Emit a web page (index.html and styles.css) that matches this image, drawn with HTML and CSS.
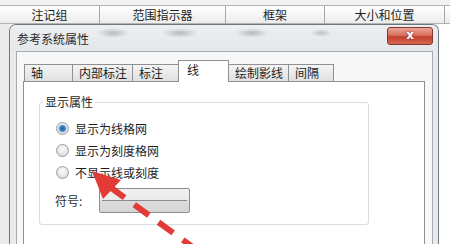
FILE: index.html
```html
<!DOCTYPE html>
<html lang="zh-CN">
<head>
<meta charset="utf-8">
<title>参考系统属性</title>
<link rel="stylesheet" href="styles.css">
</head>
<body>
<div class="header">
  <div class="hcell w1">注记组</div>
  <div class="hcell w2">范围指示器</div>
  <div class="hcell w3">框架</div>
  <div class="hcell w4">大小和位置</div>
  <div class="hcell w5"></div>
</div>
<div class="main">
  <div class="gutter-left"></div>
  <div class="dialog">
    <div class="titlebar">
      <span class="title">参考系统属性</span>
      <span class="close">x</span>
    </div>
    <div class="client">
      <div class="tabs">
        <div class="tab t1">轴</div>
        <div class="tab t2">内部标注</div>
        <div class="tab t3">标注</div>
        <div class="tab t4 active">线</div>
        <div class="tab t5">绘制影线</div>
        <div class="tab t6">间隔</div>
      </div>
      <div class="panel">
        <div class="group">
          <span class="legend">显示属性</span>
          <div class="options">
            <div class="opt"><span class="radio checked"></span>显示为线格网</div>
            <div class="opt"><span class="radio"></span>显示为刻度格网</div>
            <div class="opt"><span class="radio"></span>不显示线或刻度</div>
          </div>
          <div class="symrow">
            <span class="symlabel">符号:</span>
            <span class="symbtn"><span class="symline"></span></span>
          </div>
        </div>
      </div>
    </div>
  </div>
  <div class="gutter-right"></div>
</div>
<svg class="arrow" width="450" height="244" viewBox="0 0 450 244">
  <line x1="110" y1="187" x2="205" y2="256" stroke="#e23a35" stroke-width="6" stroke-dasharray="18 12"/>
  <polygon points="92,171 103,199 121,180" fill="#e23a35"/>
</svg>
</body>
</html>
```

FILE: styles.css
```css
html, body {
  margin: 0;
  padding: 0;
}
body {
  width: 450px;
  height: 244px;
  overflow: hidden;
  background: #f2f2f2;
  font-family: "Noto Sans CJK SC", "Noto Sans", sans-serif;
  font-size: 12px;
  color: #1e1e1e;
  position: relative;
}
.header {
  display: flex;
  padding-top: 5px;
  height: 19px;
}
.hcell {
  box-sizing: border-box;
  height: 19px;
  border-top: 1px solid #b4b4b4;
  border-bottom: 1px solid #b4b4b4;
  border-right: 1px solid #a8a8a8;
  background: linear-gradient(#ffffff, #ececec);
  text-align: center;
  line-height: 17px;
  white-space: nowrap;
}
.w1 { width: 100px; }
.w2 { width: 126px; }
.w3 { width: 99px; }
.w4 { width: 120px; }
.w5 { width: 5px; border-right: none; }

.main {
  display: flex;
  height: 220px;
  overflow: hidden;
}
.gutter-left {
  width: 9px;
  background: #ebebeb;
}
.gutter-right {
  flex: 1;
  background: #ffffff;
}
.dialog {
  box-sizing: border-box;
  width: 430px;
  height: 220px;
  border: 1px solid #6c7782;
  border-bottom: none;
  border-radius: 7px 7px 0 0;
  background: #e8eaed;
}
.titlebar {
  display: flex;
  align-items: center;
  height: 26px;
  padding-left: 7px;
  background:
    radial-gradient(ellipse 16px 5px at 103px 8px, rgba(110,110,110,.40), transparent),
    radial-gradient(ellipse 18px 5px at 170px 8px, rgba(110,110,110,.40), transparent),
    radial-gradient(ellipse 17px 5px at 242px 8px, rgba(110,110,110,.40), transparent),
    radial-gradient(ellipse 11px 4px at 311px 8px, rgba(110,110,110,.35), transparent),
    linear-gradient(#eceef0, #e5e8eb);
  border-radius: 6px 6px 0 0;
}
.title {
  color: #2a2a2a;
}
.close {
  box-sizing: border-box;
  margin-left: auto;
  margin-right: 5px;
  align-self: flex-start;
  margin-top: 2px;
  width: 46px;
  height: 18px;
  border: 1px solid #84372c;
  border-radius: 3px;
  background: linear-gradient(#eba596, #d8705e 45%, #c4412f 55%, #d5674f);
  color: #fff;
  font-family: "DejaVu Sans", sans-serif;
  font-weight: bold;
  font-size: 12px;
  line-height: 15px;
  text-align: center;
  text-shadow: 0 0 2px #6b1d12;
}
.client {
  box-sizing: border-box;
  margin: 0 5px 0 6px;
  height: 193px;
  border: 1px solid #a7abb0;
  border-bottom: none;
  background: #f7f7f7;
  padding: 8px 7px 0 6px;
}
.tabs {
  display: flex;
  align-items: flex-end;
  height: 22px;
  margin-left: 1px;
  margin-bottom: -1px;
  position: relative;
  z-index: 1;
}
.tab {
  box-sizing: border-box;
  height: 18px;
  padding-left: 6px;
  border: 1px solid #8e9093;
  border-right: none;
  background: linear-gradient(#f4f4f4, #e0e0e0);
  line-height: 16px;
  white-space: nowrap;
}
.t6 { border-right: 1px solid #8e9093; }
.tab.active {
  height: 22px;
  background: #ffffff;
  border-bottom: none;
  padding-left: 8px;
  line-height: 18px;
  border-right: 1px solid #8e9093;
}
.tab.active + .tab { border-left: none; }
.t1 { width: 48px; }
.t2 { width: 60px; }
.t3 { width: 46px; }
.t4 { width: 51px; }
.t5 { width: 59px; }
.t6 { width: 46px; }

.panel {
  box-sizing: border-box;
  height: 163px;
  border: 1px solid #8e9093;
  border-bottom: none;
  background: #ffffff;
  padding: 20px 0 0 15px;
}
.group {
  box-sizing: border-box;
  width: 330px;
  height: 123px;
  border: 1px solid #d7dde2;
  border-radius: 3px;
}
.legend {
  display: block;
  width: fit-content;
  margin: -9px 0 0 3px;
  padding: 0 2px;
  line-height: 16px;
  background: #ffffff;
}
.options {
  margin-top: 7px;
}
.opt {
  display: flex;
  align-items: center;
  height: 22px;
  padding-left: 16px;
  gap: 6px;
}
.radio {
  box-sizing: border-box;
  width: 13px;
  height: 13px;
  border-radius: 50%;
  border: 1px solid #9c9c9c;
  background: radial-gradient(circle at 50% 35%, #fbfbfb, #d4d4d4);
}
.radio.checked {
  background:
    radial-gradient(circle at 50% 50%, #1a5f9a 0, #3b86c6 2.5px, #6aaee0 3.5px, transparent 4.2px),
    radial-gradient(circle at 50% 35%, #fbfbfb, #d4d4d4);
}
.symrow {
  display: flex;
  align-items: center;
  margin-top: 5px;
  height: 25px;
  padding-left: 15px;
}
.symlabel {
  width: 44px;
  color: #333;
}
.symbtn {
  box-sizing: border-box;
  width: 91px;
  height: 25px;
  border: 1px solid #8e8e8e;
  border-radius: 2px;
  background: linear-gradient(#f0f0f0 0, #ebebeb 11px, #dcdcdc 12px, #d6d6d6);
  padding: 11px 2px 0 2px;
}
.symline {
  display: block;
  height: 1px;
  background: #8a8a8a;
}
.arrow {
  position: absolute;
  left: 0;
  top: 0;
  pointer-events: none;
}
```
